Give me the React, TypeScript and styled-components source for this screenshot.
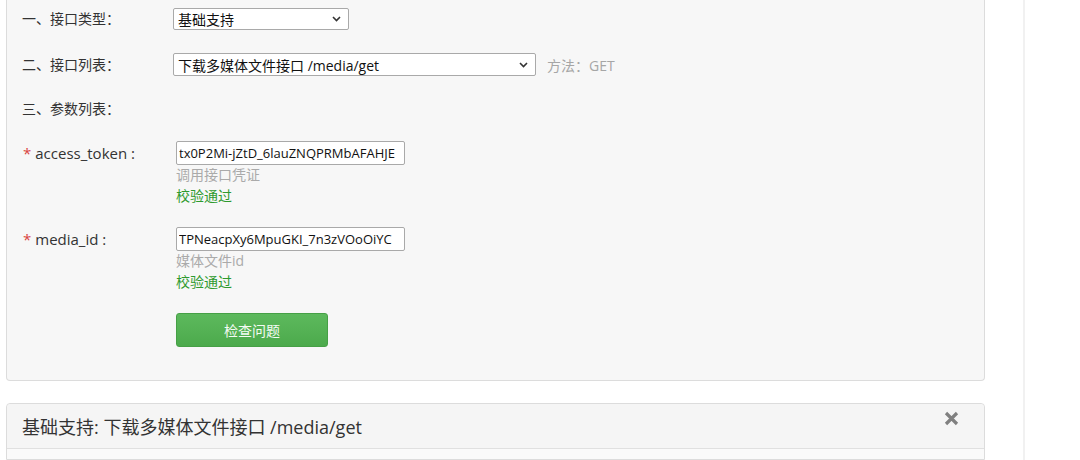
import React from "react";
import styled, { createGlobalStyle } from "styled-components";

const GlobalStyle = createGlobalStyle`
  html, body { margin: 0; padding: 0; background: #fff; }
  body {
    font-family: "Open Sans", "Noto Sans CJK SC", sans-serif;
    color: #333;
    overflow: hidden;
  }
`;

const Page = styled.div`
  display: flex;
  padding-left: 6px;
  height: 460px;
`;

const Main = styled.div`
  width: 979px;
  display: flex;
  flex-direction: column;
  gap: 22px;
`;

const Sidebar = styled.div`
  margin-left: 38px;
  flex: 1;
  border-left: 2px solid #f1f1f1;
`;

const FormPanel = styled.div`
  background: #f7f7f7;
  border: 1px solid #dcdcdc;
  border-top: none;
  border-radius: 0 0 4px 4px;
  padding: 8px 15px 33px 15px;
`;

const Row = styled.div<{ $mb?: number }>`
  display: grid;
  grid-template-columns: 151px 1fr;
  align-items: start;
  margin-bottom: ${(p) => p.$mb ?? 0}px;
`;

const Label = styled.div<{ $lh: number; $size?: number }>`
  font-size: ${(p) => p.$size ?? 14}px;
  line-height: ${(p) => p.$lh}px;
  color: #333;
  white-space: nowrap;
`;

const Star = styled.span`
  color: #d9443f;
  margin-right: 4px;
  margin-left: 1px;
`;

const Inline = styled.div`
  display: flex;
  align-items: center;
  gap: 11px;
`;

const SelectBox = styled.div<{ $w: number; $h: number }>`
  box-sizing: border-box;
  width: ${(p) => p.$w}px;
  height: ${(p) => p.$h}px;
  background: #fff;
  border: 1px solid #a9a9a9;
  border-radius: 2px;
  display: flex;
  align-items: center;
  justify-content: space-between;
  padding: 0 7px 0 4px;
  font-size: 14px;
  color: #111;
  white-space: nowrap;
`;

const Method = styled.span`
  font-size: 14px;
  color: #a6a6a6;
`;

const Field = styled.div`
  margin-left: 3px;
  display: flex;
  flex-direction: column;
`;

const TextInput = styled.input`
  box-sizing: border-box;
  width: 229px;
  height: 24px;
  border: 1px solid #a9a9a9;
  border-radius: 2px;
  background: #fff;
  padding: 0 2px 0 2px;
  font-family: "Open Sans", "Noto Sans CJK SC", sans-serif;
  font-size: 13px;
  color: #111;
  outline: none;
`;

const Hint = styled.div`
  font-size: 14px;
  line-height: 20px;
  color: #aaa;
`;

const Pass = styled.div`
  font-size: 14px;
  line-height: 21px;
  color: #2e9a2e;
`;

const CheckButton = styled.button`
  margin-left: 3px;
  box-sizing: border-box;
  width: 152px;
  height: 34px;
  border: 1px solid #46a046;
  border-radius: 3px;
  background: linear-gradient(#5db95d, #4caa4c);
  color: #f4fbf4;
  font-family: "Open Sans", "Noto Sans CJK SC", sans-serif;
  font-size: 14px;
  cursor: pointer;
`;

const ResultPanel = styled.div`
  border: 1px solid #dcdcdc;
  border-radius: 4px 4px 0 0;
  background: #fafafa;
  flex: 1;
`;

const ResultHeader = styled.div`
  height: 44px;
  background: #f5f5f5;
  border-bottom: 1px solid #e0e0e0;
  display: flex;
  align-items: center;
  justify-content: space-between;
  padding: 0 25px 0 15px;
  border-radius: 4px 4px 0 0;
`;

const Title = styled.div`
  font-size: 18px;
  color: #333;
`;

const CloseIcon = styled.svg`
  width: 15px;
  height: 15px;
  margin-top: -16px;
`;

const Chevron = () => (
  <svg width="9" height="6" viewBox="0 0 9 6">
    <path d="M1 1 L4.5 4.5 L8 1" stroke="#333" strokeWidth="1.6" fill="none" />
  </svg>
);

export default function App() {
  return (
    <>
      <GlobalStyle />
      <Page>
        <Main>
          <FormPanel>
            <Row $mb={23}>
              <Label $lh={22}>一、接口类型：</Label>
              <SelectBox $w={176} $h={22}>
                <span>基础支持</span>
                <Chevron />
              </SelectBox>
            </Row>
            <Row $mb={22}>
              <Label $lh={23}>二、接口列表：</Label>
              <Inline>
                <SelectBox $w={363} $h={23}>
                  <span>下载多媒体文件接口 /media/get</span>
                  <Chevron />
                </SelectBox>
                <Method>方法：GET</Method>
              </Inline>
            </Row>
            <Row $mb={21}>
              <Label $lh={22}>三、参数列表：</Label>
              <div />
            </Row>
            <Row $mb={21}>
              <Label $lh={24} $size={15}>
                <Star>*</Star>access_token :
              </Label>
              <Field>
                <TextInput readOnly value="tx0P2Mi-jZtD_6lauZNQPRMbAFAHJE" />
                <Hint>调用接口凭证</Hint>
                <Pass>校验通过</Pass>
              </Field>
            </Row>
            <Row $mb={21}>
              <Label $lh={24} $size={15}>
                <Star>*</Star>media_id :
              </Label>
              <Field>
                <TextInput readOnly value="TPNeacpXy6MpuGKI_7n3zVOoOiYC" />
                <Hint>媒体文件id</Hint>
                <Pass>校验通过</Pass>
              </Field>
            </Row>
            <Row>
              <div />
              <CheckButton>检查问题</CheckButton>
            </Row>
          </FormPanel>
          <ResultPanel>
            <ResultHeader>
              <Title>基础支持: 下载多媒体文件接口 /media/get</Title>
              <CloseIcon viewBox="0 0 15 15">
                <path d="M2 2 L13 13 M13 2 L2 13" stroke="#808080" strokeWidth="3.2" strokeLinecap="butt" />
              </CloseIcon>
            </ResultHeader>
          </ResultPanel>
        </Main>
        <Sidebar />
      </Page>
    </>
  );
}
